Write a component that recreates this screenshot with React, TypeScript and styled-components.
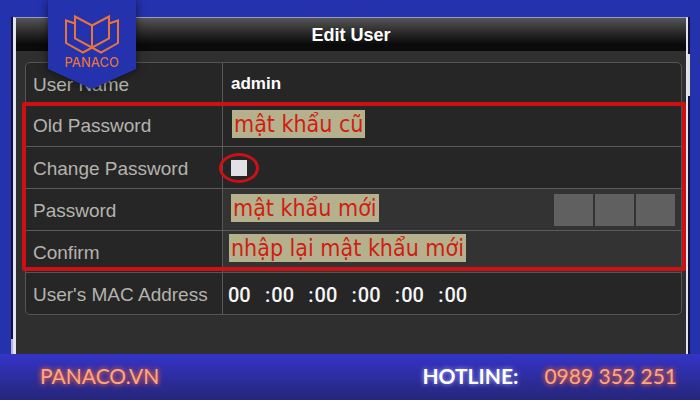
import React from "react";
import styled, { createGlobalStyle } from "styled-components";

const GlobalStyle = createGlobalStyle`
  *, *::before, *::after { box-sizing: border-box; }
  body { margin: 0; background: #2432ad; font-family: "Liberation Sans", Arial, sans-serif; }
`;

const Page = styled.div`
  position: relative;
  display: flex;
  flex-direction: column;
  min-height: 100vh;
  overflow: hidden;
`;

const Screen = styled.main`
  position: relative;
  display: flex;
  flex: 1;
  margin: 17px 10px 0 11px;
  padding-left: 2px;
  padding-right: 2px;
  background: #11123a;
  &::before, &::after { content: ""; position: absolute; width: 2px; }
  &::before { left: 0; bottom: 0; height: 15px; background: #b4b5d6; }
  &::after { right: 0; top: 37px; height: 42px; background: #dfe3cf; }
`;

const Dialog = styled.form`
  flex: 1;
  min-width: 0;
  padding-bottom: 16px;
  border: solid #e4e4ee;
  border-width: 1px 2px 0 3px;
  border-top-color: #9c9cc4;
  background: #2f2f2f;
`;

const Title = styled.h1`
  margin: 0 0 11px;
  height: 33px;
  line-height: 34px;
  text-align: center;
  font-size: 18px;
  color: #fff;
  background: linear-gradient(#555 0%, #3c3c3c 25%, #1f1f1f 55%, #0a0a0a 80%, #0a0a0a 100%);
`;

const Fields = styled.div`
  margin: 0 4px 0 9px;
  border: 1px solid #555;
  border-radius: 5px;
  background: #262626;
`;

const Marked = styled.div`
  position: relative;
  border-bottom: 1px solid #555;
  &::after {
    content: "";
    position: absolute;
    inset: -2px -5px 1px -4px;
    border: 4px solid #cd1013;
    border-radius: 2px;
    pointer-events: none;
  }
`;

const Row = styled.div<{ $edge?: boolean }>`
  display: flex;
  height: ${(p) => (p.$edge ? 41 : 42)}px;
  & + & { border-top: 1px solid #5b5b5b; }
`;

const Label = styled.label`
  display: flex;
  align-items: center;
  flex: 0 0 197px;
  padding: 2px 0 0 7px;
  font-size: 19px;
  color: #b5b3ae;
  border-right: 1px solid #585858;
  white-space: nowrap;
`;

const Cell = styled.div<{ $raised?: boolean }>`
  position: relative;
  flex: 1;
  min-width: 0;
  display: flex;
  align-items: center;
  padding: 0 6px 0 8px;
  background: ${(p) => (p.$raised ? "#333" : "transparent")};
`;

const TextInput = styled.input`
  flex: 1;
  min-width: 0;
  height: 32px;
  padding: 0;
  border: 0;
  outline: 0;
  background: transparent;
  color: #fff;
  font: bold 17px "Liberation Sans", Arial, sans-serif;
`;

const Note = styled.span<{ $left: number; $top: number }>`
  position: absolute;
  left: ${(p) => p.$left}px;
  top: ${(p) => p.$top}px;
  height: 28px;
  padding: 0 2px;
  line-height: 28px;
  font-family: "DejaVu Sans Condensed", "Noto Sans", sans-serif;
  font-size: 23px;
  white-space: nowrap;
  color: #cf1d13;
  background: #b5b18c;
`;

const Tick = styled.span`
  position: relative;
  display: flex;
  &::after {
    content: "";
    position: absolute;
    inset: -7px -12px;
    border: 3px solid #cd1013;
    border-radius: 50%;
    pointer-events: none;
  }
`;

const CheckBox = styled.input`
  appearance: none;
  width: 16px;
  height: 16px;
  margin: 0;
  background: #e2e1e6;
  &:checked { background: #8f8fa0; }
`;

const Strength = styled.div`
  display: flex;
  gap: 2px;
`;

const StrengthStep = styled.span`
  width: 39px;
  height: 32px;
  background: #606060;
`;

const Mac = styled.div`
  display: flex;
  gap: 14px;
  margin-left: -3px;
  padding-top: 2px;
`;

const MacPart = styled.span`
  display: flex;
  align-items: center;
  gap: 1px;
  font: 500 20px/22px Roboto, sans-serif;
  color: #f6f6f6;
`;

const MacInput = styled.input`
  width: 23px;
  padding: 0;
  border: 0;
  outline: 0;
  background: transparent;
  font: inherit;
  color: inherit;
`;

const Ribbon = styled.div`
  position: absolute;
  left: 48px;
  top: 0;
  filter: drop-shadow(0 0 4px rgba(0, 0, 0, 0.6));
`;

const RibbonShape = styled.div`
  display: flex;
  flex-direction: column;
  align-items: center;
  width: 88px;
  height: 89px;
  padding-top: 14px;
  clip-path: polygon(0 0, 100% 0, 100% 69px, 50% 100%, 0 69px);
  background: #2432ad;
  color: #e8743c;
  font: 500 13px/14px Inter, sans-serif;
`;

const Footer = styled.footer`
  position: relative;
  display: flex;
  align-items: center;
  height: 46px;
  padding: 0 23px 2px 40px;
  background: linear-gradient(#3434c8, #26267a);
  font: 21px/26px Lato, sans-serif;
`;

const SiteLink = styled.a`
  margin-right: auto;
  color: #ffa77c;
  text-decoration: none;
  text-shadow: 0 0 4px #e8683c, 0 0 7px #c05050;
`;

const Hotline = styled.span`
  margin-right: 26px;
  font-weight: 700;
  color: #fff;
  text-shadow: 0 0 5px #b0b0ff;
`;

const PhoneLink = styled(SiteLink)`
  margin-right: 0;
`;

const macParts = [1, 2, 3, 4, 5, 6];

export default function App() {
  return (
    <>
      <GlobalStyle />
      <Page>
        <Screen>
          <Dialog>
            <Title>Edit User</Title>
            <Fields>
              <Row $edge>
                <Label htmlFor="name">User Name</Label>
                <Cell>
                  <TextInput id="name" defaultValue="admin" />
                </Cell>
              </Row>
              <Marked>
                <Row>
                  <Label htmlFor="old">Old Password</Label>
                  <Cell>
                    <TextInput id="old" type="password" />
                    <Note $left={9} $top={6}>mật khẩu cũ</Note>
                  </Cell>
                </Row>
                <Row>
                  <Label htmlFor="change">Change Password</Label>
                  <Cell>
                    <Tick>
                      <CheckBox id="change" type="checkbox" />
                    </Tick>
                  </Cell>
                </Row>
                <Row>
                  <Label htmlFor="new">Password</Label>
                  <Cell $raised>
                    <TextInput id="new" type="password" />
                    <Note $left={8} $top={5}>mật khẩu mới</Note>
                    <Strength>
                      <StrengthStep />
                      <StrengthStep />
                      <StrengthStep />
                    </Strength>
                  </Cell>
                </Row>
                <Row>
                  <Label htmlFor="confirm">Confirm</Label>
                  <Cell $raised>
                    <TextInput id="confirm" type="password" />
                    <Note $left={6} $top={3}>nhập lại mật khẩu mới</Note>
                  </Cell>
                </Row>
              </Marked>
              <Row $edge>
                <Label htmlFor="mac1">User's MAC Address</Label>
                <Cell>
                  <Mac>
                    {macParts.map((n) => (
                      <MacPart key={n}>
                        {n > 1 && <span>:</span>}
                        <MacInput id={`mac${n}`} aria-label={`MAC part ${n}`} defaultValue="00" />
                      </MacPart>
                    ))}
                  </Mac>
                </Cell>
              </Row>
            </Fields>
          </Dialog>
        </Screen>
        <Footer>
          <SiteLink href="#home">PANACO.VN</SiteLink>
          <Hotline>HOTLINE:</Hotline>
          <PhoneLink href="tel:0989352251">0989 352 251</PhoneLink>
        </Footer>
        <Ribbon>
          <RibbonShape>
            <svg width="56" height="41" viewBox="0 0 56 41" fill="none" stroke="currentColor" strokeWidth="2">
              <path d="M28 11.500 L11 2.500 V24.500 L37 38.500 L54 29 V6.500 L45 9.500" />
              <path d="M28 11.500 L45 2.500 V24.500 L19 38.500 L2 29 V6.500 L11 9.500" />
              <path d="M28 11 V34" />
            </svg>
            <span>PANACO</span>
          </RibbonShape>
        </Ribbon>
      </Page>
    </>
  );
}
